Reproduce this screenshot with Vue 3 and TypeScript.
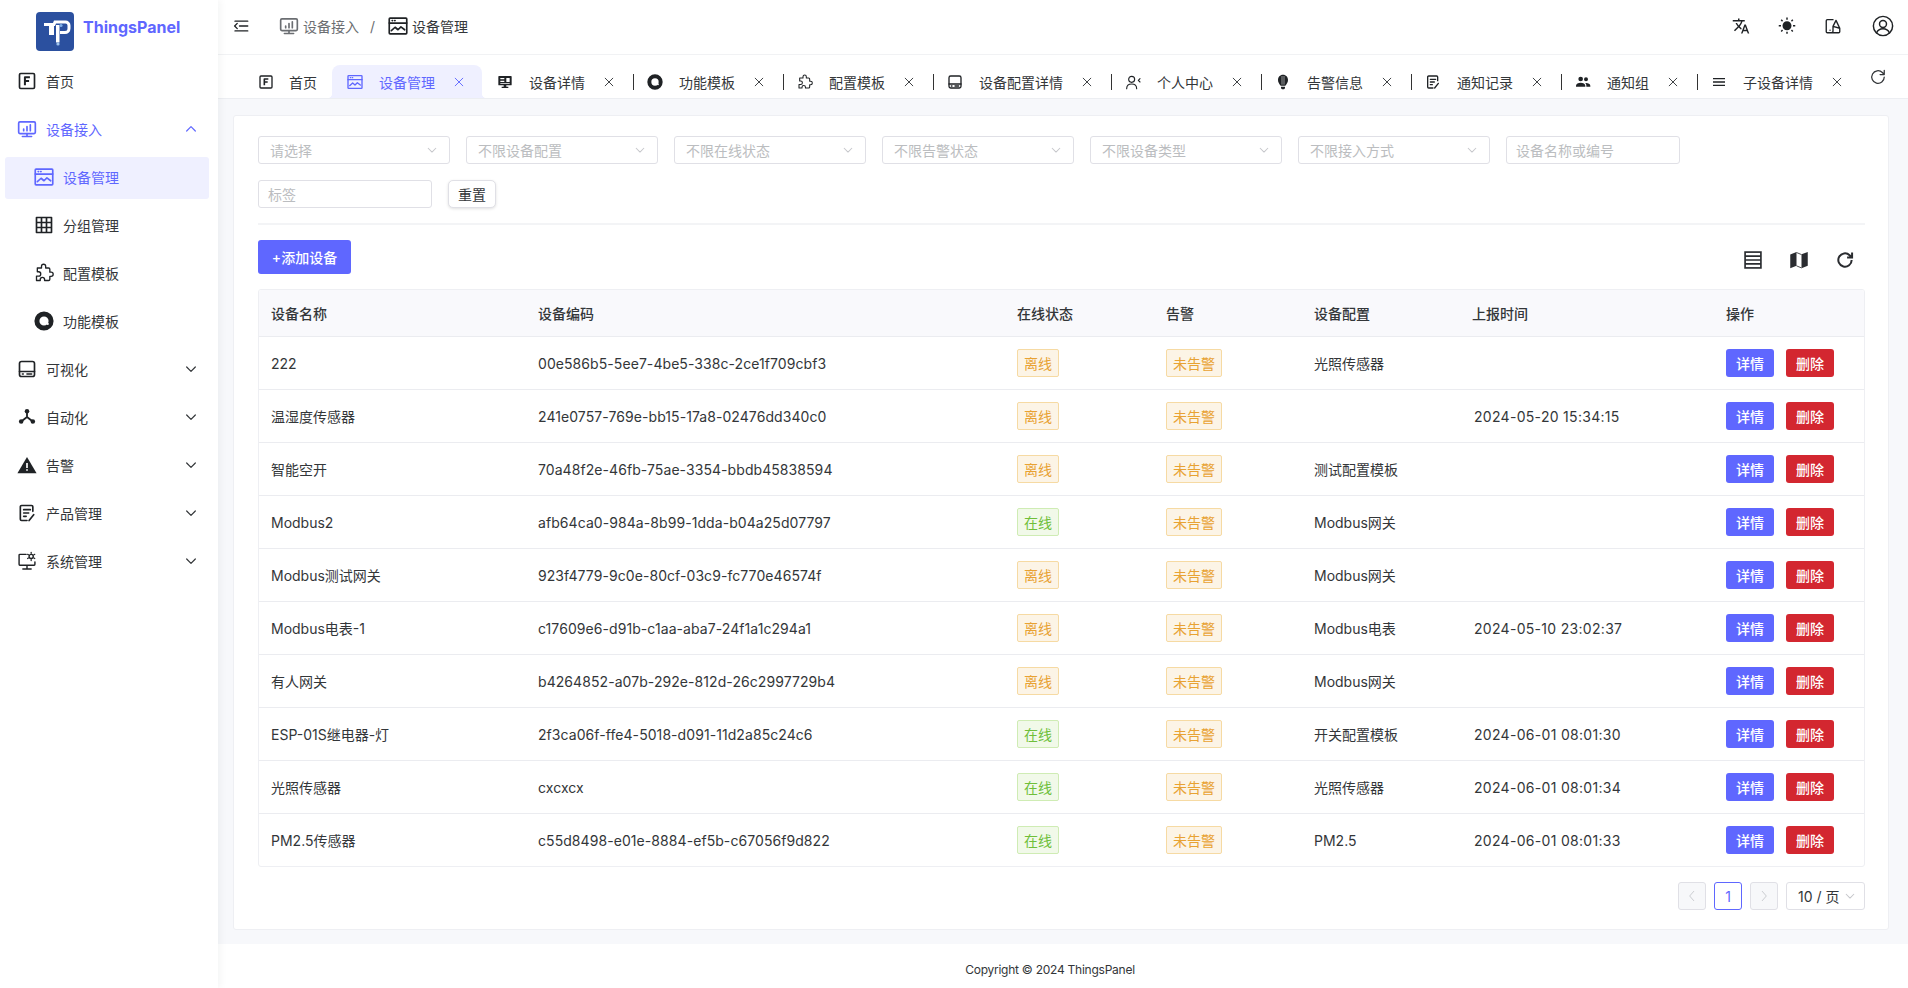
<script setup lang="ts">
const s = (inner: string) =>
  `<g fill="none" stroke="currentColor" stroke-width="2" stroke-linecap="round" stroke-linejoin="round">${inner}</g>`
const f = (d: string) => `<path fill="currentColor" d="${d}"/>`

const icons: Record<string, string> = {
  fbox: s('<rect x="3" y="3" width="18" height="18" rx="1.5"/><path stroke-width="2.4" stroke-linecap="butt" d="M9.5 17V7.5h6M9.5 12h5"/>'),
  monitor: s('<rect x="2" y="3.5" width="20" height="14" rx="1.5"/><path d="M12 17.5V21M6.5 21h11M8 14v-2M12 14V9M16 14V7"/>'),
  chart: s('<rect x="1.500" y="2.500" width="21" height="19" rx="1"/><path d="M1.500 8.500h21M5 5.500h.5M8 5.500h.5M4 17.500l4.500-4 3.500 3 3.500-3.500 4.500 3.500"/>'),
  grid: s('<rect x="3" y="3" width="18" height="18" stroke-linecap="butt"/><path stroke-linecap="butt" d="M3 9h18M3 15h18M9 3v18M15 3v18"/>'),
  puzzle: s('<path stroke-width="1.6" d="M20.5 11H19V7.5a1.5 1.5 0 0 0-1.500-1.500H14V4a2.500 2.500 0 0 0-5 0v2H4v4.500h1.500a2.600 2.600 0 0 1 0 5.200H3V21h4.500v-1.200a2.600 2.600 0 0 1 5.200 0V21h4.800a1.500 1.500 0 0 0 1.500-1.500V16h1.500a2.500 2.500 0 0 0 0-5z"/>'),
  ring: '<circle cx="12" cy="12" r="8.500" fill="none" stroke="currentColor" stroke-width="6"/><circle cx="16.500" cy="15.500" r="1.300" fill="#fff"/>',
  panel: s('<rect x="3" y="3" width="18" height="18" rx="2.500"/><path d="M3 15h18M6.500 18h1M12 18h5.500"/>'),
  flow: '<path d="M12 5v7M12 12l-6.500 5M12 12l6.500 5" fill="none" stroke="currentColor" stroke-width="2.200"/><circle cx="12" cy="5" r="2.700" fill="currentColor"/><circle cx="5" cy="17.500" r="2.700" fill="currentColor"/><circle cx="19" cy="17.500" r="2.700" fill="currentColor"/>',
  warn: '<path fill="currentColor" d="M12 2.500 23.500 22H.5z"/><path fill="none" stroke="#fff" stroke-width="2" d="M12 9.500v6M12 17v2"/>',
  doc: s('<path d="M19 10V4.500A1.500 1.500 0 0 0 17.500 3h-12A1.500 1.500 0 0 0 4 4.500v15A1.500 1.500 0 0 0 5.500 21H12M8 8h8M8 12h6M8 16h3M20 14l-5.500 7"/>'),
  system: s('<path stroke-width="1.700" d="M11 4H3.500a1 1 0 0 0-1 1v11a1 1 0 0 0 1 1h17a1 1 0 0 0 1-1v-3M12 17v4M7 21.500h10"/><circle cx="17" cy="6.500" r="2.500" stroke-width="1.700"/><path stroke-width="1.500" d="M17 1.500v1.200M17 10.300v1.200M12.700 4l1 .6M20.300 8.400l1 .6M12.700 9l1-.6M20.300 4.600l1-.6"/>'),
  screen: '<path fill="currentColor" fill-rule="evenodd" d="M3 3h18a1 1 0 0 1 1 1v12a1 1 0 0 1-1 1h-7v2h3v2H7v-2h3v-2H3a1 1 0 0 1-1-1V4a1 1 0 0 1 1-1zm2 3v2h6V6zm9 0v6h5V6zM5 10v2h6v-2zm0 3.500v1h14v-1z"/>',
  person: s('<circle cx="10" cy="8" r="4.500" stroke-width="1.700"/><path stroke-width="1.700" d="M2.500 22c0-4.500 3-7 7.500-7s7.500 2.500 7.500 7M22.500 7l-2.500 2.500 2.500 2.500"/>'),
  bulb: '<path fill="currentColor" d="M12 1c4.500 0 7.500 3.500 7.500 8 0 3.500-2 6-4 8.500h-7c-2-2.500-4-5-4-8.500 0-4.500 3-8 7.500-8zM9 19h6v2.500L13.500 23h-3L9 21.500z"/><path stroke="#fff" stroke-width=".8" d="M10.500 3v13M13.500 3v13"/>',
  group: f('M8.500 11a3.500 3.500 0 1 0 0-7 3.500 3.500 0 0 0 0 7zM16.500 11a3 3 0 1 0 0-6 3 3 0 0 0 0 6zM1.500 19v-1.500c0-3 3.500-4.500 7-4.500s7 1.500 7 4.500V19zM17 19v-1.500c0-1.700-.7-3-1.800-3.900.5-.1 1-.1 1.500-.1 3 0 6.300 1.300 6.300 4V19z'),
  lines: s('<path stroke-linecap="butt" d="M3 7h18M3 12h18M3 17h18"/>'),
  menu: s('<path stroke-width="1.800" d="M4 5.500h17M10 12h11M4 18.500h17M7 8.500 3.500 12 7 15.500"/>'),
  translate: f('M12.870 15.070l-2.540-2.510.03-.03A17.520 17.520 0 0 0 14.070 6H17V4h-7V2H8v2H1v2h11.170C11.500 7.920 10.440 9.750 9 11.350 8.070 10.320 7.300 9.190 6.690 8h-2c.73 1.630 1.730 3.170 2.980 4.560l-5.090 5.020L4 19l5-5 3.110 3.110.76-2.040zM18.500 10h-2L12 22h2l1.120-3h4.750L21 22h2l-4.500-12zm-2.620 7l1.620-4.330L19.120 17h-3.240z'),
  sun: f('M6.760 4.840l-1.800-1.790-1.410 1.410 1.790 1.790 1.420-1.410zM4 10.500H1v2h3v-2zm9-9.950h-2V3.500h2V.55zm7.450 3.910l-1.410-1.410-1.790 1.790 1.410 1.410 1.790-1.790zm-3.210 13.700l1.790 1.800 1.410-1.410-1.800-1.790-1.400 1.400zM20 10.500v2h3v-2h-3zm-8-5c-3.310 0-6 2.690-6 6s2.690 6 6 6 6-2.690 6-6-2.690-6-6-6zm-1 16.950h2V19.500h-2v2.950zm-7.450-3.910l1.410 1.410 1.790-1.800-1.410-1.410-1.790 1.800z'),
  theme: s('<path stroke-width="1.800" d="M12 3.500H4.500A1.500 1.500 0 0 0 3 5v14.500A1.500 1.500 0 0 0 4.500 21h15a1.500 1.500 0 0 0 1.500-1.500V15l-5-10.500-4 8V19a2 2 0 0 1-2 2M12 12.500 21 15M8 17.500h.2"/>'),
  user: s('<circle cx="12" cy="12" r="10.500" stroke-width="1.600"/><circle cx="12" cy="9.800" r="3.800" stroke-width="1.600"/><path stroke-width="1.600" d="M5 19.500c1.200-3 4-4.500 7-4.500s5.800 1.500 7 4.500"/>'),
  list: s('<rect x="2.500" y="2.500" width="19" height="19" stroke-linecap="butt" stroke-linejoin="miter"/><path stroke-linecap="butt" d="M2.500 7.300h19M2.500 12h19M2.500 16.700h19"/>'),
  map: f('M1.500 5.500 9 2.500v16.500L1.500 22zM15 5l7.500-2.500V19L15 22z') + '<path fill="none" stroke="currentColor" stroke-width="1" d="M9 3l6 2.500M9 19l6 2.500"/>',
  reload: s('<path stroke-width="2.400" d="M20 12a8 8 0 1 1-2.500-5.800L20 8.500M20.500 3v6h-6" stroke-linecap="butt" stroke-linejoin="miter"/>'),
  close: s('<path stroke-width="1.600" stroke-linecap="butt" d="M5 5l14 14M19 5 5 19"/>'),
  thinReload: s('<path stroke-width="1.500" d="M19.500 12a7.500 7.500 0 1 1-2.300-5.400L19.500 9M19.500 4v5h-5"/>'),
  down: s('<path stroke-width="1.800" d="M5.500 9l6.500 6.500L18.500 9"/>'),
  up: s('<path stroke-width="1.800" d="M5.500 15 12 8.500l6.500 6.500"/>'),
  prev: s('<path stroke-width="1.500" d="M15 4l-7 8 7 8"/>'),
  next: s('<path stroke-width="1.500" d="M9 4l7 8-7 8"/>')
}

interface NavItem {
  label: string
  icon: string
  child?: boolean
  active?: boolean
  open?: boolean
  arrow?: string
}
const nav: NavItem[] = [
  { label: '首页', icon: 'fbox' },
  { label: '设备接入', icon: 'monitor', open: true, arrow: 'up' },
  { label: '设备管理', icon: 'chart', child: true, active: true },
  { label: '分组管理', icon: 'grid', child: true },
  { label: '配置模板', icon: 'puzzle', child: true },
  { label: '功能模板', icon: 'ring', child: true },
  { label: '可视化', icon: 'panel', arrow: 'down' },
  { label: '自动化', icon: 'flow', arrow: 'down' },
  { label: '告警', icon: 'warn', arrow: 'down' },
  { label: '产品管理', icon: 'doc', arrow: 'down' },
  { label: '系统管理', icon: 'system', arrow: 'down' }
]

const tabs = [
  { label: '首页', icon: 'fbox', home: true },
  { label: '设备管理', icon: 'chart', active: true },
  { label: '设备详情', icon: 'screen' },
  { label: '功能模板', icon: 'ring' },
  { label: '配置模板', icon: 'puzzle' },
  { label: '设备配置详情', icon: 'panel' },
  { label: '个人中心', icon: 'person' },
  { label: '告警信息', icon: 'bulb' },
  { label: '通知记录', icon: 'doc' },
  { label: '通知组', icon: 'group' },
  { label: '子设备详情', icon: 'lines', last: true }
]

const selects = ['请选择', '不限设备配置', '不限在线状态', '不限告警状态', '不限设备类型', '不限接入方式']
const headers = ['设备名称', '设备编码', '在线状态', '告警', '设备配置', '上报时间', '操作']
const rows = [
  ['222', '00e586b5-5ee7-4be5-338c-2ce1f709cbf3', false, '光照传感器', ''],
  ['温湿度传感器', '241e0757-769e-bb15-17a8-02476dd340c0', false, '', '2024-05-20 15:34:15'],
  ['智能空开', '70a48f2e-46fb-75ae-3354-bbdb45838594', false, '测试配置模板', ''],
  ['Modbus2', 'afb64ca0-984a-8b99-1dda-b04a25d07797', true, 'Modbus网关', ''],
  ['Modbus测试网关', '923f4779-9c0e-80cf-03c9-fc770e46574f', false, 'Modbus网关', ''],
  ['Modbus电表-1', 'c17609e6-d91b-c1aa-aba7-24f1a1c294a1', false, 'Modbus电表', '2024-05-10 23:02:37'],
  ['有人网关', 'b4264852-a07b-292e-812d-26c2997729b4', false, 'Modbus网关', ''],
  ['ESP-01S继电器-灯', '2f3ca06f-ffe4-5018-d091-11d2a85c24c6', true, '开关配置模板', '2024-06-01 08:01:30'],
  ['光照传感器', 'cxcxcx', true, '光照传感器', '2024-06-01 08:01:34'],
  ['PM2.5传感器', 'c55d8498-e01e-8884-ef5b-c67056f9d822', true, 'PM2.5', '2024-06-01 08:01:33']
] as [string, string, boolean, string, string][]
</script>

<template>
  <div class="app">
    <aside class="sidebar">
      <div class="brand">
        <svg class="logo" viewBox="0 0 38 39">
          <rect width="38" height="39" rx="4" fill="#2b509f" />
          <path d="M8 12.500h10l1-2.500h10.500a3.500 3.500 0 0 1 3.500 3.500v3a4 4 0 0 1-4 4H24" fill="none" stroke="#fff" stroke-width="3" />
          <path d="M13 14h5v9h-5zM20 13h3.500v17.500H20z" fill="#fff" />
          <circle cx="22" cy="32" r="1.600" fill="#9fc4ee" />
          <circle cx="25" cy="13.500" r="1.600" fill="#7fb0e8" />
        </svg>
        <span class="brand-name">ThingsPanel</span>
      </div>
      <nav class="nav">
        <div
          v-for="n in nav"
          :key="n.label"
          class="nav-item"
          :class="{ child: n.child, active: n.active, open: n.open }"
        >
          <svg class="nav-icon" viewBox="0 0 24 24" v-html="icons[n.icon]"></svg>
          <span class="nav-label">{{ n.label }}</span>
          <svg v-if="n.arrow" class="nav-arrow" viewBox="0 0 24 24" v-html="icons[n.arrow]"></svg>
        </div>
      </nav>
    </aside>

    <div class="main">
      <header class="topbar">
        <svg class="menu-btn" viewBox="0 0 24 24" v-html="icons.menu"></svg>
        <div class="crumbs">
          <svg class="crumb-icon muted" viewBox="0 0 24 24" v-html="icons.monitor"></svg>
          <span class="muted">设备接入</span>
          <span class="slash">/</span>
          <svg class="crumb-icon" viewBox="0 0 24 24" v-html="icons.chart"></svg>
          <span>设备管理</span>
        </div>
        <div class="top-actions">
          <svg class="ta" viewBox="0 0 24 24" v-html="icons.translate"></svg>
          <svg class="ta" viewBox="0 0 24 24" v-html="icons.sun"></svg>
          <svg class="ta" viewBox="0 0 24 24" v-html="icons.theme"></svg>
          <svg class="ta ta-user" viewBox="0 0 24 24" v-html="icons.user"></svg>
        </div>
      </header>

      <div class="tabbar">
        <div
          v-for="t in tabs"
          :key="t.label"
          class="tab"
          :class="{ active: t.active, home: t.home, last: t.last }"
        >
          <svg class="tab-icon" viewBox="0 0 24 24" v-html="icons[t.icon]"></svg>
          <span class="tab-label">{{ t.label }}</span>
          <svg v-if="!t.home" class="tab-close" viewBox="0 0 24 24" v-html="icons.close"></svg>
        </div>
        <svg class="tab-refresh" viewBox="0 0 24 24" v-html="icons.thinReload"></svg>
      </div>

      <main class="content">
        <section class="card">
          <div class="filters">
            <div v-for="sel in selects" :key="sel" class="select">
              <span>{{ sel }}</span>
              <svg class="select-arrow" viewBox="0 0 24 24" v-html="icons.down"></svg>
            </div>
            <div class="input">设备名称或编号</div>
            <div class="input">标签</div>
            <button class="reset">重置</button>
          </div>
          <div class="divider"></div>
          <div class="toolbar">
            <button class="add">+添加设备</button>
            <div class="tools">
              <svg viewBox="0 0 24 24" v-html="icons.list"></svg>
              <svg viewBox="0 0 24 24" v-html="icons.map"></svg>
              <svg viewBox="0 0 24 24" v-html="icons.reload"></svg>
            </div>
          </div>
          <div class="table-wrap">
            <table>
              <colgroup>
                <col style="width: 266px" />
                <col style="width: 479px" />
                <col style="width: 149px" />
                <col style="width: 148px" />
                <col style="width: 158px" />
                <col style="width: 254px" />
                <col />
              </colgroup>
              <thead>
                <tr>
                  <th v-for="h in headers" :key="h">{{ h }}</th>
                </tr>
              </thead>
              <tbody>
                <tr v-for="r in rows" :key="r[1]">
                  <td>{{ r[0] }}</td>
                  <td class="code">{{ r[1] }}</td>
                  <td class="boxed">
                    <span class="tag" :class="r[2] ? 'ok' : 'warnTag'">{{ r[2] ? '在线' : '离线' }}</span>
                  </td>
                  <td class="boxed"><span class="tag warnTag">未告警</span></td>
                  <td>{{ r[3] }}</td>
                  <td class="time">{{ r[4] }}</td>
                  <td class="boxed">
                    <div class="ops">
                      <button class="op blue">详情</button>
                      <button class="op red">删除</button>
                    </div>
                  </td>
                </tr>
              </tbody>
            </table>
          </div>
          <div class="pager">
            <div class="pg disabled"><svg viewBox="0 0 24 24" v-html="icons.prev"></svg></div>
            <div class="pg current">1</div>
            <div class="pg disabled"><svg viewBox="0 0 24 24" v-html="icons.next"></svg></div>
            <div class="pg-size">
              <span>10 / 页</span>
              <svg viewBox="0 0 24 24" v-html="icons.down"></svg>
            </div>
          </div>
        </section>
      </main>
      <footer class="footer">Copyright © 2024 ThingsPanel</footer>
    </div>
  </div>
</template>

<style>
html,
body {
  margin: 0;
  background: #fff;
}
</style>

<style scoped>
* {
  box-sizing: border-box;
}
.app {
  display: flex;
  height: 988px;
  overflow: hidden;
  font-family: Inter, 'Noto Sans CJK SC', sans-serif;
  font-size: 14px;
  color: #333639;
  background: #fff;
}
.sidebar {
  width: 218px;
  flex: none;
  background: #fff;
  box-shadow: 2px 0 8px rgba(29, 35, 41, 0.05);
  position: relative;
  z-index: 2;
}
.brand {
  height: 55px;
  padding: 12px 0 0 36px;
  display: flex;
  align-items: flex-start;
  gap: 9px;
}
.logo {
  width: 38px;
  height: 39px;
  flex: none;
}
.brand-name {
  font-size: 16px;
  font-weight: 700;
  color: #5f67ff;
  line-height: 30px;
}
.nav {
  display: flex;
  flex-direction: column;
  gap: 6px;
  padding: 6px 9px 0 5px;
}
.nav-item {
  height: 42px;
  display: flex;
  align-items: center;
  padding: 0 10px 2px 12px;
  border-radius: 3px;
  color: #333639;
}
.nav-item.child {
  padding-left: 29px;
}
.nav-item.open {
  color: #5f67ff;
}
.nav-item.active {
  background: #eff0ff;
  color: #5f67ff;
}
.nav-icon {
  width: 20px;
  height: 20px;
  margin-right: 9px;
  flex: none;
  color: #1f2225;
}
.nav-item.open .nav-icon,
.nav-item.active .nav-icon {
  color: #5f67ff;
}
.nav-label {
  flex: 1;
}
.nav-arrow {
  width: 16px;
  height: 16px;
  flex: none;
}
.main {
  flex: 1;
  min-width: 0;
  display: flex;
  flex-direction: column;
}
.topbar {
  height: 55px;
  flex: none;
  display: flex;
  align-items: center;
  padding: 0 14px 2px 14px;
  border-bottom: 1px solid #f1f2f4;
}
.menu-btn {
  width: 18px;
  height: 18px;
  flex: none;
  color: #1f2225;
}
.crumbs {
  display: flex;
  align-items: center;
  margin-left: 29px;
}
.crumb-icon {
  width: 20px;
  height: 20px;
  margin-right: 4px;
  color: #1f2225;
}
.crumb-icon.muted {
  color: #6b6e72;
}
.muted {
  color: #6b6e72;
}
.slash {
  margin: 0 13px 0 11px;
  color: #6b6e72;
}
.top-actions {
  margin-left: auto;
  display: flex;
  align-items: center;
  gap: 28px;
  color: #1f2225;
}
.ta {
  width: 18px;
  height: 18px;
}
.ta-user {
  width: 22px;
  height: 22px;
  margin-left: 2px;
}
.tabbar {
  height: 44px;
  flex: none;
  display: flex;
  align-items: flex-end;
  padding-left: 25px;
  position: relative;
  background: #fff;
  border-bottom: 1px solid #eceef2;
}
.tab {
  height: 33px;
  display: flex;
  align-items: center;
  padding: 0 17px 0 15px;
  position: relative;
  flex: none;
}
.tab::after {
  content: '';
  position: absolute;
  right: -2px;
  top: 9px;
  height: 16px;
  width: 1px;
  background: #333;
}
.tab.home::after,
.tab.active::after,
.tab.last::after {
  display: none;
}
.tab.home {
  padding-right: 15px;
}
.tab.home .tab-icon {
  margin-right: 15px;
}
.tab.active {
  background: #eff0ff;
  color: #5f67ff;
  border-radius: 8px 8px 0 0;
}
.tab.active::before {
  content: '';
  position: absolute;
  left: -5px;
  right: -5px;
  bottom: 0;
  height: 5px;
  background:
    radial-gradient(circle at 0 0, transparent 5px, #eff0ff 5.5px) left bottom / 5px 5px no-repeat,
    radial-gradient(circle at 100% 0, transparent 5px, #eff0ff 5.5px) right bottom / 5px 5px no-repeat;
}
.tab-icon {
  width: 16px;
  height: 16px;
  margin-right: 16px;
  flex: none;
  color: #1f2225;
}
.tab.active .tab-icon {
  color: #5f67ff;
}
.tab-close {
  width: 14px;
  height: 14px;
  margin: 0 -1px 0 17px;
  flex: none;
}
.tab-refresh {
  position: absolute;
  right: 20px;
  top: 12px;
  width: 20px;
  height: 20px;
}
.content {
  flex: 1;
  min-height: 0;
  background: #f7f8fb;
  padding: 16px 19px 14px 15px;
}
.card {
  height: 100%;
  background: #fff;
  border: 1px solid #eeeff3;
  border-radius: 3px;
  padding: 20px 23px 0 24px;
}
.filters {
  display: flex;
  flex-wrap: wrap;
  gap: 16px;
}
.select,
.input {
  height: 28px;
  border: 1px solid #e0e0e6;
  border-radius: 3px;
  color: #bbbdc0;
  display: flex;
  align-items: center;
  background: #fff;
}
.select {
  width: 192px;
  padding: 0 11px;
  justify-content: space-between;
}
.select-arrow {
  width: 14px;
  height: 14px;
  margin-right: -1px;
  color: #c6c7cb;
}
.input {
  width: 174px;
  padding: 0 9px;
}
.reset {
  width: 48px;
  height: 28px;
  border: 1px solid #e0e0e6;
  border-radius: 5px;
  background: #fff;
  color: #333639;
  font: inherit;
  padding: 0;
  box-shadow: 0 1px 3px rgba(0, 0, 0, 0.12);
}
.divider {
  height: 2px;
  background: #f3f4f6;
  margin: 15px 0;
}
.toolbar {
  display: flex;
  justify-content: space-between;
  align-items: center;
  height: 34px;
  margin-bottom: 15px;
}
.add {
  width: 93px;
  height: 34px;
  border: 0;
  border-radius: 3px;
  background: #5f67ff;
  color: #fff;
  font: inherit;
  font-weight: 500;
  padding: 0;
}
.tools {
  display: flex;
  gap: 26px;
  padding-right: 10px;
  margin-top: 6px;
  color: #2a2c30;
}
.tools svg {
  width: 20px;
  height: 20px;
}
.table-wrap {
  border: 1px solid #eeeff3;
  border-radius: 3px;
  overflow: hidden;
}
table {
  width: 100%;
  border-collapse: separate;
  border-spacing: 0;
  table-layout: fixed;
}
th {
  height: 47px;
  text-align: left;
  font-weight: 500;
  background: #f9f9fc;
  padding: 0 13px;
  border-bottom: 1px solid #ebecf0;
}
td {
  height: 53px;
  padding: 0 13px;
  border-bottom: 1px solid #ebecf0;
}
th:first-child,
td:first-child {
  padding-left: 12px;
}
.code {
  letter-spacing: 0.07px;
}
.time {
  letter-spacing: 0.3px;
  padding-left: 15px;
}
tbody tr:last-child td {
  border-bottom: 0;
  height: 52px;
}
.tag {
  display: inline-flex;
  align-items: center;
  height: 28px;
  padding: 0 6px;
  border: 1px solid;
  border-radius: 2px;
  vertical-align: middle;
}
.warnTag {
  color: #e8a233;
  background: #fcf4e6;
  border-color: #f6daa3;
}
.ok {
  color: #6fbf3a;
  background: #f1f9e9;
  border-color: #cfecb4;
}
.ops {
  display: flex;
  gap: 12px;
}
.op {
  width: 48px;
  height: 28px;
  border: 0;
  border-radius: 3px;
  color: #fff;
  font: inherit;
  font-weight: 500;
  padding: 0;
}
.blue {
  background: #5f67ff;
}
.red {
  background: #d32730;
}
.pager {
  display: flex;
  justify-content: flex-end;
  gap: 8px;
  margin-top: 15px;
}
.pg {
  width: 28px;
  height: 28px;
  border: 1px solid #e0e0e6;
  border-radius: 3px;
  display: flex;
  align-items: center;
  justify-content: center;
}
.pg svg {
  width: 14px;
  height: 14px;
}
.pg.disabled {
  background: #f7f8fa;
  color: #c4c6ca;
}
.pg.current {
  border-color: #5f67ff;
  color: #5f67ff;
}
.pg-size {
  width: 79px;
  height: 28px;
  border: 1px solid #e0e0e6;
  border-radius: 3px;
  display: flex;
  align-items: center;
  padding-left: 11px;
  gap: 4px;
  white-space: nowrap;
}
.pg-size svg {
  width: 14px;
  height: 14px;
  color: #c6c7cb;
  flex: none;
}
.footer {
  height: 44px;
  flex: none;
  display: flex;
  align-items: center;
  justify-content: center;
  padding: 6px 26px 0 0;
  background: #fff;
  font-size: 12px;
  letter-spacing: -0.25px;
}
</style>
